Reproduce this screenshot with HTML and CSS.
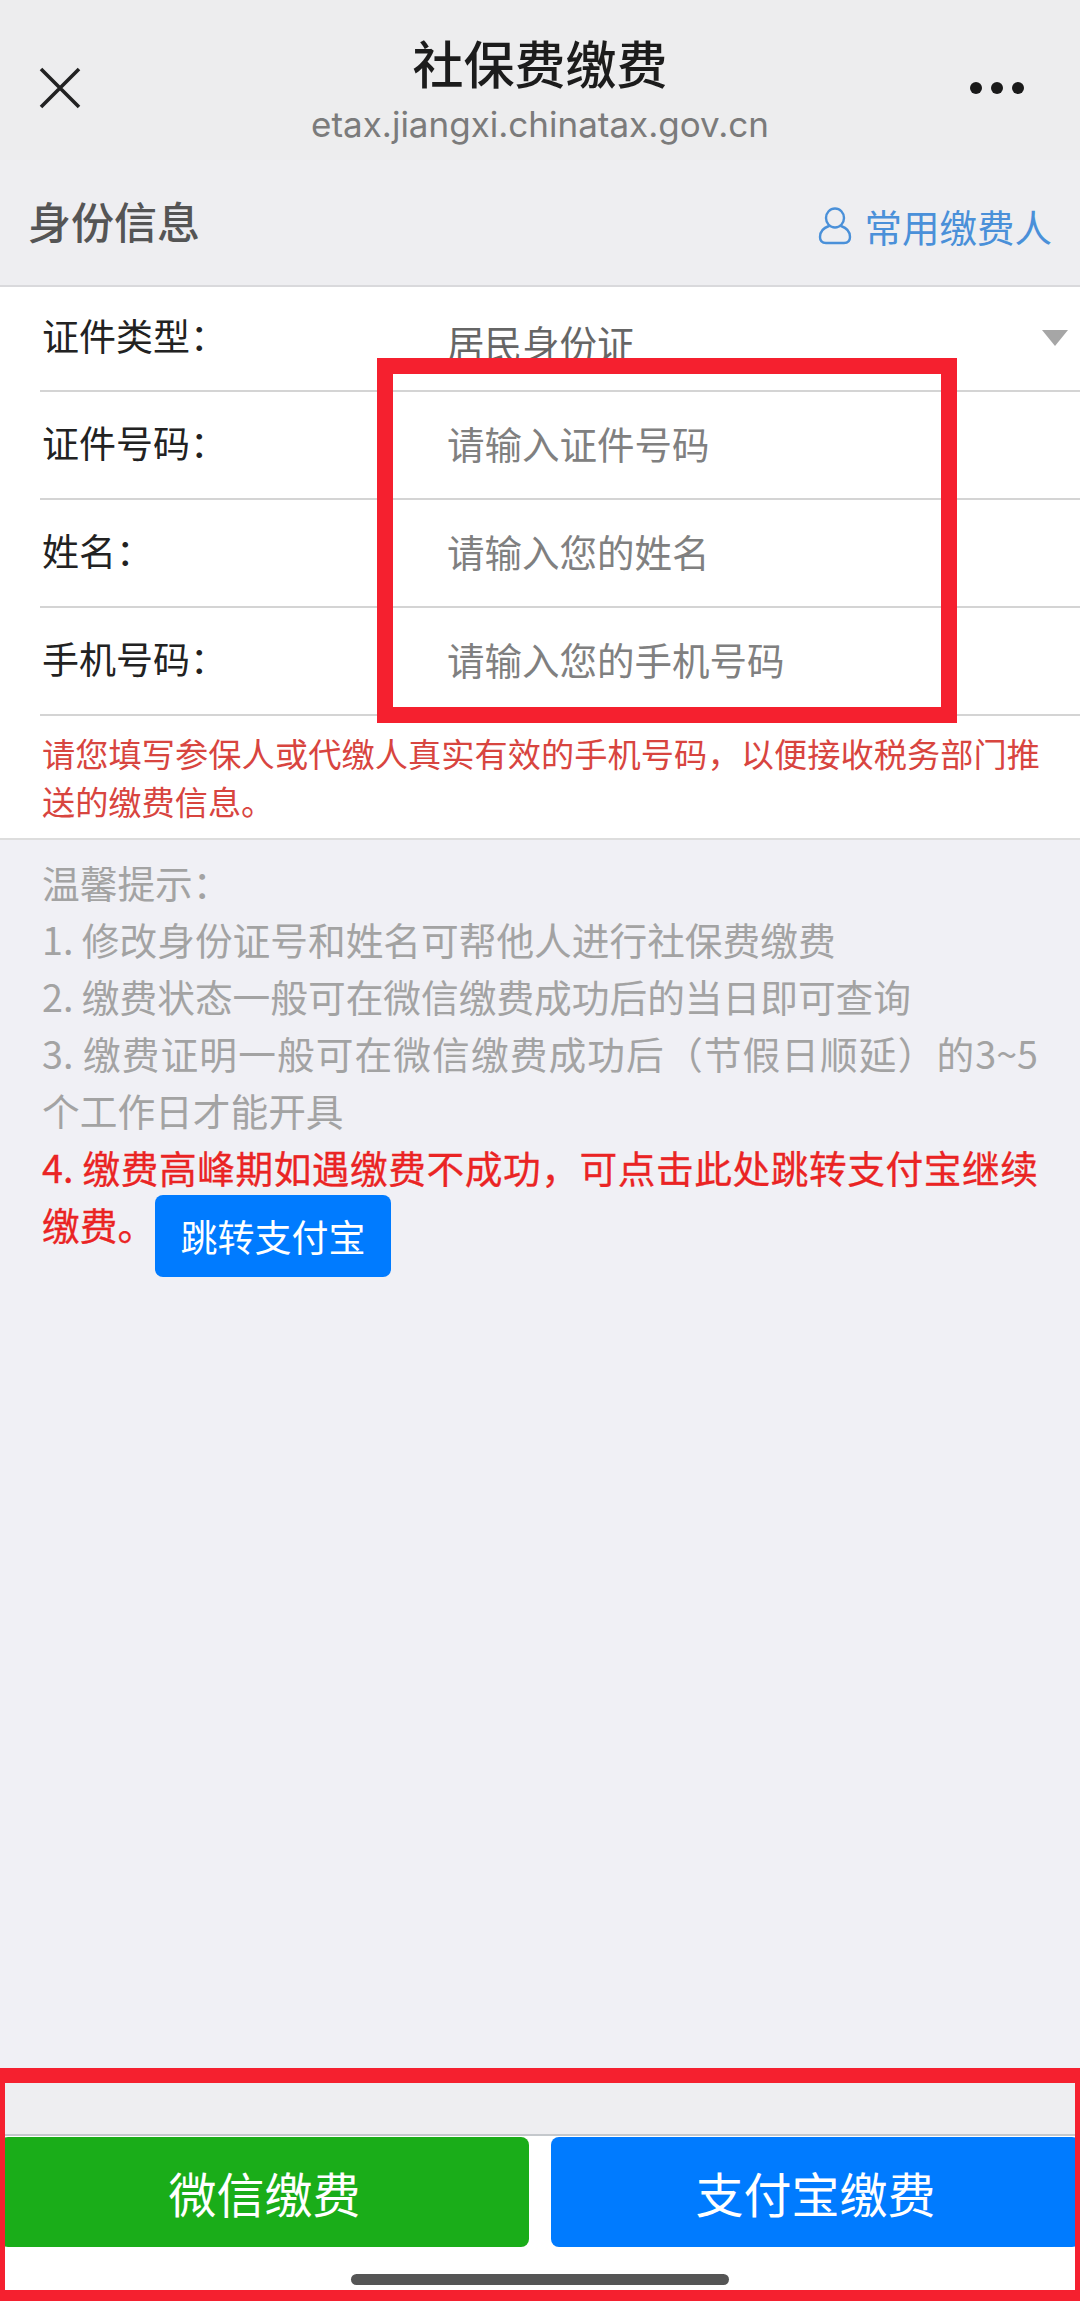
FILE: index.html
```html
<!DOCTYPE html>
<html lang="zh-CN">
<head>
    <meta charset="UTF-8">
    <meta name="viewport" content="width=device-width, initial-scale=1.0">
    <title>社保费缴费</title>
    <link rel="stylesheet" href="styles.css">
</head>
<body>

    <header class="topbar">
        <svg class="icon-close" width="44" height="44" viewBox="0 0 44 44">
            <path d="M3 3 L41 41 M41 3 L3 41" stroke="#222" stroke-width="3.6" fill="none"/>
        </svg>
        <div class="topbar-title">
            <h1>社保费缴费</h1>
            <p>etax.jiangxi.chinatax.gov.cn</p>
        </div>
        <svg class="icon-more" width="56" height="14" viewBox="0 0 56 14">
            <circle cx="7" cy="7" r="6" fill="#1a1a1a"/>
            <circle cx="28" cy="7" r="6" fill="#1a1a1a"/>
            <circle cx="49" cy="7" r="6" fill="#1a1a1a"/>
        </svg>
    </header>

    <div class="section-head">
        <h2>身份信息</h2>
        <a class="payer-link">
            <svg width="34" height="38" viewBox="0 0 34 38">
                <ellipse cx="17" cy="11" rx="9" ry="9.5" stroke="#4a90d9" stroke-width="2.4" fill="none"/>
                <path d="M11 19 C5 21 2 25 2 30 C2 34 4 36 8 36 L26 36 C30 36 32 34 32 30 C32 25 29 21 23 19" stroke="#4a90d9" stroke-width="2.4" fill="none"/>
            </svg>
            <span>常用缴费人</span>
        </a>
    </div>

    <main class="form-card">
        <div class="form-row form-row-first">
            <span class="form-label">证件类型：</span>
            <span class="form-value">居民身份证</span>
            <span class="select-arrow"></span>
        </div>
        <div class="form-row">
            <span class="form-label">证件号码：</span>
            <span class="form-value">请输入证件号码</span>
        </div>
        <div class="form-row">
            <span class="form-label">姓名：</span>
            <span class="form-value">请输入您的姓名</span>
        </div>
        <div class="form-row">
            <span class="form-label">手机号码：</span>
            <span class="form-value">请输入您的手机号码</span>
        </div>
        <p class="form-note">请您填写参保人或代缴人真实有效的手机号码，以便接收税务部门推送的缴费信息。</p>
    </main>

    <section class="tips">
        <p>温馨提示：</p>
        <p>1. 修改身份证号和姓名可帮他人进行社保费缴费</p>
        <p>2. 缴费状态一般可在微信缴费成功后的当日即可查询</p>
        <p>3. 缴费证明一般可在微信缴费成功后（节假日顺延）的3~5个工作日才能开具</p>
        <p class="tips-alert">4. 缴费高峰期如遇缴费不成功，可点击此处跳转支付宝继续缴费。<button class="button-jump">跳转支付宝</button></p>
    </section>

    <footer class="paybar">
        <div class="paybar-spacer"></div>
        <div class="paybar-buttons">
            <button class="pay-button pay-wechat">微信缴费</button>
            <button class="pay-button pay-alipay">支付宝缴费</button>
        </div>
        <div class="home-area"><span class="home-bar"></span></div>
    </footer>

    <!-- marcacoes vermelhas por cima da captura -->
    <div class="mark mark-fields"></div>
    <div class="mark mark-footer"></div>

</body>
</html>
```

FILE: styles.css
```css
* {
    box-sizing: border-box;
}

html, body {
    height: 2301px;
}

body {
    position: relative;
    margin: 0;
    padding: 0;
    display: flex;
    flex-direction: column;
    overflow: hidden;
    background-color: #f0f0f5;
    font-family: "Noto Sans CJK SC", "Noto Sans", sans-serif;
    text-spacing-trim: space-all;
}

.topbar {
    height: 160px;
    padding: 0 55px;
    display: grid;
    grid-template-columns: 1fr auto 1fr;
    align-items: center;
    background-color: #ededee;
}

.icon-close {
    margin-top: 16px;
    margin-left: -17px;
}

.icon-more {
    margin-top: 16px;
    justify-self: end;
}

.topbar-title {
    align-self: start;
    padding-top: 27px;
    text-align: center;
}

.topbar-title h1 {
    margin: 0;
    font-size: 51px;
    line-height: 70px;
    font-weight: 500;
    color: #1c1c1c;
}

.topbar-title p {
    margin: 0;
    font-size: 35px;
    line-height: 54px;
    color: #7b7b7b;
    font-family: "Inter", "Noto Sans", sans-serif;
}

.section-head {
    height: 127px;
    padding: 0 28px 6px 28px;
    display: flex;
    align-items: center;
    justify-content: space-between;
    background-color: #eeeef1;
    border-bottom: 2px solid #d9d9dc;
}

.section-head h2 {
    margin: 0;
    font-size: 43px;
    line-height: 60px;
    font-weight: 500;
    color: #555;
}

.payer-link {
    display: flex;
    align-items: center;
    gap: 13px;
    margin-top: 12px;
    font-size: 37.5px;
    line-height: 50px;
    color: #4a90d9;
}

.form-card {
    background-color: #fff;
    border-bottom: 2px solid #ddd;
    height: 553px;
}

.form-row {
    position: relative;
    height: 108px;
    margin-left: 40px;
    padding-left: 2px;
    display: flex;
    align-items: center;
    border-bottom: 2px solid #d4d4d4;
}

.form-row-first {
    height: 105px;
}

.form-label {
    width: 405px;
    margin-bottom: 6px;
    font-size: 37px;
    color: #222;
}

.form-value {
    margin-bottom: 5px;
    font-size: 37.5px;
    color: #808080;
}

.form-row-first .form-label {
    margin-bottom: 8px;
}

.form-row-first .form-value {
    margin-top: 6px;
    margin-bottom: 0;
    color: #666;
}

.select-arrow {
    position: absolute;
    right: 12px;
    top: 43px;
    width: 0;
    height: 0;
    border-left: 13px solid transparent;
    border-right: 13px solid transparent;
    border-top: 16px solid #a6a6a6;
}

.form-note {
    margin: 0;
    padding: 13px 40px 0 42px;
    font-size: 33.2px;
    line-height: 48px;
    text-align: justify;
    color: #d8453f;
}

.tips {
    padding: 13px 42px 0 42px;
    font-size: 37.7px;
    line-height: 57px;
    text-align: justify;
    color: #a3a3a3;
}

.tips p {
    margin: 0;
}

.tips-alert {
    color: #ea2424;
    -webkit-text-stroke: 0.3px #ea2424;
}

.button-jump {
    width: 236px;
    height: 82px;
    padding: 0;
    border: none;
    border-radius: 8px;
    background-color: #007bff;
    color: #fff;
    font-family: inherit;
    font-size: 37px;
    -webkit-text-stroke: 0;
    vertical-align: top;
}

.paybar {
    margin-top: auto;
}

.paybar-spacer {
    height: 54px;
    background-color: #eeeef1;
    border-bottom: 2px solid #c4c8cc;
}

.paybar-buttons {
    padding-top: 1px;
    display: flex;
    gap: 22px;
    background-color: #fff;
}

.pay-button {
    width: 529px;
    height: 110px;
    padding: 0;
    border: none;
    border-radius: 8px;
    color: #fff;
    font-family: inherit;
    font-size: 48px;
}

.pay-wechat {
    background-color: #1aad19;
}

.pay-alipay {
    background-color: #007bff;
}

.home-area {
    height: 54px;
    padding-top: 27px;
    display: flex;
    justify-content: center;
    background-color: #fff;
}

.home-bar {
    width: 378px;
    height: 11px;
    border-radius: 6px;
    background-color: #555;
}

.mark {
    position: absolute;
    border-style: solid;
    border-color: #f5202f;
}

.mark-fields {
    left: 377px;
    top: 358px;
    width: 580px;
    height: 365px;
    border-width: 16px;
}

.mark-footer {
    left: 0;
    top: 2068px;
    width: 1080px;
    height: 233px;
    border-width: 15px 5px 11px 5px;
}
```
